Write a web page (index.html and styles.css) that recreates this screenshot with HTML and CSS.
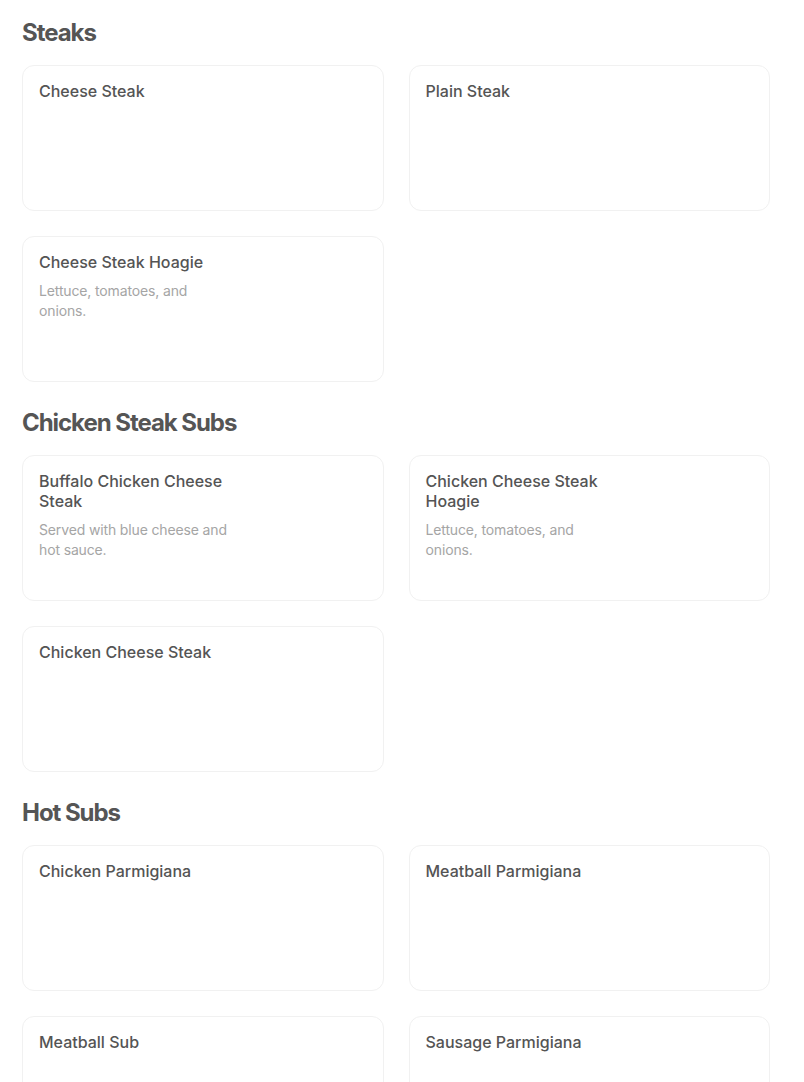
FILE: index.html
```html
<!DOCTYPE html>
<html>
<head>
<meta charset="utf-8">
<link rel="stylesheet" href="styles.css">
</head>
<body>
<main class="menu">
  <section class="section">
    <h2 class="section-title">Steaks</h2>
    <div class="grid">
      <div class="card"><div class="card-text"><div class="item-name">Cheese Steak</div></div></div>
      <div class="card"><div class="card-text"><div class="item-name">Plain Steak</div></div></div>
      <div class="card"><div class="card-text"><div class="item-name">Cheese Steak Hoagie</div><div class="item-desc">Lettuce, tomatoes, and onions.</div></div></div>
    </div>
  </section>
  <section class="section">
    <h2 class="section-title">Chicken Steak Subs</h2>
    <div class="grid">
      <div class="card"><div class="card-text"><div class="item-name">Buffalo Chicken Cheese Steak</div><div class="item-desc">Served with blue cheese and hot sauce.</div></div></div>
      <div class="card"><div class="card-text"><div class="item-name">Chicken Cheese Steak Hoagie</div><div class="item-desc">Lettuce, tomatoes, and onions.</div></div></div>
      <div class="card"><div class="card-text"><div class="item-name">Chicken Cheese Steak</div></div></div>
    </div>
  </section>
  <section class="section">
    <h2 class="section-title">Hot Subs</h2>
    <div class="grid">
      <div class="card"><div class="card-text"><div class="item-name">Chicken Parmigiana</div></div></div>
      <div class="card"><div class="card-text"><div class="item-name">Meatball Parmigiana</div></div></div>
      <div class="card"><div class="card-text"><div class="item-name">Meatball Sub</div></div></div>
      <div class="card"><div class="card-text"><div class="item-name">Sausage Parmigiana</div></div></div>
    </div>
  </section>
</main>
</body>
</html>
```
FILE: styles.css
```css
html, body {
  margin: 0;
  padding: 0;
  background: #ffffff;
}
body {
  font-family: Inter, "Noto Sans", Arial, sans-serif;
  color: #545454;
}
.menu {
  padding: 17px 34px 0 22px;
}
.section {
  margin-bottom: 25px;
}
.section-title {
  margin: 0 0 16px 0;
  font-size: 24px;
  line-height: 32px;
  font-weight: 700;
  letter-spacing: -1.05px;
  color: #555555;
}
.grid {
  display: grid;
  grid-template-columns: 1fr 1fr;
  column-gap: 25px;
  row-gap: 25px;
}
.card {
  height: 146px;
  box-sizing: border-box;
  border: 1px solid #f1f1f1;
  border-radius: 12px;
  padding: 15px 16px;
  background: #fff;
}
.card-text {
  max-width: 194px;
}
.item-name {
  font-size: 16px;
  line-height: 20px;
  font-weight: 500;
  color: #545454;
}
.item-desc {
  margin-top: 9px;
  font-size: 14px;
  line-height: 20px;
  font-weight: 400;
  letter-spacing: -0.14px;
  color: #a5a5a5;
}
```
